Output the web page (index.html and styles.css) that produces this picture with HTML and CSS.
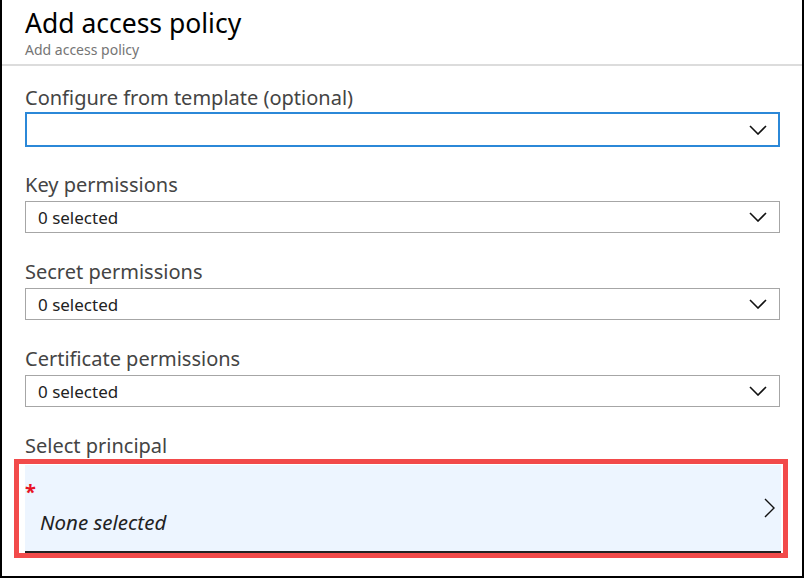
FILE: index.html
```html
<!DOCTYPE html>
<html>
<head>
<meta charset="utf-8">
<link rel="stylesheet" href="styles.css">
</head>
<body>
<div class="frame">
  <header class="head">
    <h1 class="title">Add access policy</h1>
    <div class="subtitle">Add access policy</div>
  </header>
  <div class="form">
    <div class="field">
      <div class="label">Configure from template (optional)</div>
      <div class="select select-focus">
        <span class="value"></span>
        <svg class="chev" width="18" height="10" viewBox="0 0 18 10"><path d="M1 1 L9 9 L17 1" fill="none" stroke="#111" stroke-width="1.6"/></svg>
      </div>
    </div>
    <div class="field">
      <div class="label">Key permissions</div>
      <div class="select">
        <span class="value">0 selected</span>
        <svg class="chev" width="18" height="10" viewBox="0 0 18 10"><path d="M1 1 L9 9 L17 1" fill="none" stroke="#111" stroke-width="1.6"/></svg>
      </div>
    </div>
    <div class="field">
      <div class="label">Secret permissions</div>
      <div class="select">
        <span class="value">0 selected</span>
        <svg class="chev" width="18" height="10" viewBox="0 0 18 10"><path d="M1 1 L9 9 L17 1" fill="none" stroke="#111" stroke-width="1.6"/></svg>
      </div>
    </div>
    <div class="field">
      <div class="label">Certificate permissions</div>
      <div class="select">
        <span class="value">0 selected</span>
        <svg class="chev" width="18" height="10" viewBox="0 0 18 10"><path d="M1 1 L9 9 L17 1" fill="none" stroke="#111" stroke-width="1.6"/></svg>
      </div>
    </div>
    <div class="field last">
      <div class="label">Select principal</div>
      <div class="highlight">
        <div class="picker">
          <div class="picker-text">
            <span class="req">*</span>
            <span class="none">None selected</span>
          </div>
          <svg class="chev-r" width="12" height="20" viewBox="0 0 12 20"><path d="M1 1 L10 10 L1 19" fill="none" stroke="#111" stroke-width="1.4"/></svg>
        </div>
      </div>
    </div>
  </div>
</div>
</body>
</html>
```
FILE: styles.css
```css
* { box-sizing: border-box; }
html, body { margin: 0; padding: 0; background: #fff; }
body { font-family: "Noto Sans", "Open Sans", sans-serif; }
.frame {
  width: 804px;
  height: 578px;
  border: 2px solid #000;
  border-top: none;
  overflow: hidden;
}
.head {
  padding: 6px 0 0 23px;
  height: 66px;
  border-bottom: 2px solid #dcdcdc;
}
.title {
  margin: 0;
  font-size: 26.5px;
  font-weight: 400;
  line-height: 34px;
  color: #000;
}
.subtitle {
  font-size: 14px;
  line-height: 18px;
  margin-top: 1px;
  color: #757575;
}
.form {
  padding: 19px 0 0 23px;
  width: 778px;
}
.field { margin-bottom: 26px; }
.field.last { margin-bottom: 0; }
.label {
  font-size: 20px;
  line-height: 26px;
  color: #444;
  margin-bottom: 3px;
}
.select {
  height: 32px;
  border: 1px solid #a6a6a6;
  display: flex;
  align-items: center;
  justify-content: space-between;
  padding: 0 12px 0 12px;
}
.select-focus {
  border: 2px solid #2b88d8;
  height: 35px;
  margin-top: -2px;
  margin-bottom: -1px;
  padding-left: 11px;
  padding-right: 11px;
}
.value {
  font-size: 17px;
  color: #222;
}
.chev { display: block; }
.highlight {
  margin-left: -11px;
  margin-right: -8px;
  margin-top: -3px;
  border: 5px solid #f24a4a;
  padding: 1px 2px 0 6px;
}
.picker {
  height: 88px;
  background: #edf5ff;
  border-bottom: 2px solid #222;
  display: flex;
  align-items: center;
  justify-content: space-between;
  padding: 0 5px 0 0;
}
.picker-text {
  display: flex;
  flex-direction: column;
  padding-top: 0;
}
.req {
  color: #e81123;
  font-size: 20px;
  line-height: 20px;
  height: 18px;
  font-weight: 700;
}
.none {
  font-style: italic;
  font-size: 20.5px;
  line-height: 26px;
  color: #222;
  padding-left: 15px;
  margin-top: 9px;
}
.chev-r { display: block; }
```
